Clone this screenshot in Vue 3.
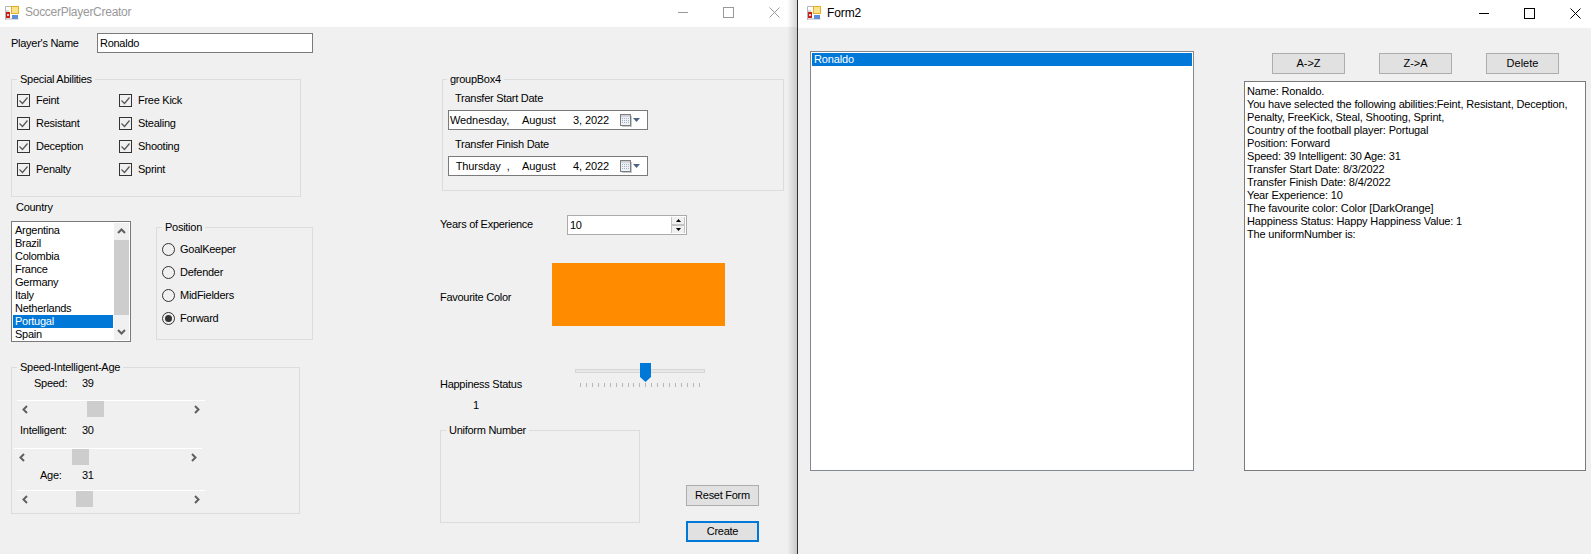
<template>
  <div class="desktop">
    <section class="win win-main">
      <header class="titlebar inactive">
        <svg class="app-icon" viewBox="0 0 14 14" width="14" height="14"><path d="M.5 14V.5H6M.5 5H4M.5 13H13.5" fill="none" stroke="#b5b5b5"/><rect x="1" y="6" width="4" height="6" fill="#c8201c"/><rect x="2" y="8" width="2" height="2" fill="#f4d0c8"/><rect x="6" y="0" width="8" height="8" fill="#e8b020"/><rect x="7" y="1" width="6" height="6" fill="#fbe38c"/><rect x="7" y="9" width="6" height="4" fill="#5b8fd8"/></svg>
        <span class="title-text">SoccerPlayerCreator</span>
        <div class="controls">
          <span class="ctl"><i class="min"></i></span>
          <span class="ctl"><i class="max"></i></span>
          <span class="ctl"><svg width="11" height="11" viewBox="0 0 11 11"><path d="M.5.5l10 10M10.5.5l-10 10" stroke="currentColor" fill="none"/></svg></span>
        </div>
      </header>
      <div class="main-body">
        <div class="col-left">
          <div class="name-row">
            <label class="name-label">Player's Name</label>
            <div class="textbox">Ronaldo</div>
          </div>

          <div class="group abilities">
            <span class="group-title">Special Abilities</span>
            <div class="check-grid">
              <div v-for="a in abilities" :key="a" class="check">
                <svg width="13" height="13" viewBox="0 0 13 13"><rect x=".5" y=".5" width="12" height="12" fill="none" stroke="#333"/><path d="M2.500 6.500l3 3 5-6" fill="none" stroke="#555" stroke-width="1.2"/></svg>
                <span>{{ a }}</span>
              </div>
            </div>
          </div>

          <div class="country-label">Country</div>
          <div class="country-row">
            <div class="listbox">
              <ul class="items">
                <li v-for="c in countries" :key="c" :class="{ sel: c === 'Portugal' }">{{ c }}</li>
              </ul>
              <div class="vscroll">
                <svg class="chev" width="9" height="6" viewBox="0 0 9 6"><path d="M1 5l3.500-3.500L8 5" fill="none" stroke="#606060" stroke-width="2"/></svg>
                <div class="vthumb"></div>
                <svg class="chev" width="9" height="6" viewBox="0 0 9 6"><path d="M1 1l3.500 3.500L8 1" fill="none" stroke="#606060" stroke-width="2"/></svg>
              </div>
            </div>
            <div class="group position">
              <span class="group-title">Position</span>
              <div v-for="p in positions" :key="p" class="radio">
                <span class="dot" :class="{ on: p === 'Forward' }"></span>
                <span>{{ p }}</span>
              </div>
            </div>
          </div>

          <div class="group stats">
            <span class="group-title">Speed-Intelligent-Age</span>
            <div v-for="s in stats" :key="s.name" class="stat" :class="s.cls">
              <div class="stat-line">
                <span class="stat-name">{{ s.name }}</span>
                <span>{{ s.value }}</span>
              </div>
              <div class="hscroll">
                <svg width="6" height="9" viewBox="0 0 6 9"><path d="M5 1L1.500 4.500 5 8" fill="none" stroke="#606060" stroke-width="2"/></svg>
                <div class="hthumb" :style="{ left: s.thumb + 'px' }"></div>
                <svg width="6" height="9" viewBox="0 0 6 9"><path d="M1 1l3.500 3.500L1 8" fill="none" stroke="#606060" stroke-width="2"/></svg>
              </div>
            </div>
          </div>
        </div>

        <div class="col-right">
          <div class="group dates">
            <span class="group-title">groupBox4</span>
            <template v-for="d in dates" :key="d.label">
              <div class="date-label">{{ d.label }}</div>
              <div class="datepicker">
                <span class="d-day">{{ d.day }}</span>
                <span>August</span>
                <span>{{ d.rest }}</span>
                <svg width="12" height="13" viewBox="0 0 12 13"><rect x=".5" y=".5" width="10" height="11" fill="#eef1f6" stroke="#7d7d7d"/><rect x="11" y="2" width="1" height="11" fill="#c8c8c8"/><rect x="2" y="12" width="10" height="1" fill="#c8c8c8"/><rect x="1" y="1" width="9" height="2" fill="#cfd3d9"/><path d="M2.500 4v6M4.500 4v6M6.500 4v6M8.500 4v6" stroke="#a3b1c7" stroke-dasharray="1 1" fill="none"/></svg>
                <svg width="7" height="4" viewBox="0 0 7 4"><path d="M0 0h7L3.500 4z" fill="#4d6185"/></svg>
              </div>
            </template>
          </div>

          <div class="years-row">
            <span class="years-label">Years of Experience</span>
            <div class="numeric">
              <span>10</span>
              <div class="spin">
                <div class="spin-btn"><svg width="5" height="3" viewBox="0 0 5 3"><path d="M2.500 0L5 3H0z" fill="#000"/></svg></div>
                <div class="spin-btn"><svg width="5" height="3" viewBox="0 0 5 3"><path d="M0 0h5L2.500 3z" fill="#000"/></svg></div>
              </div>
            </div>
          </div>

          <div class="color-row">
            <span class="color-label">Favourite Color</span>
            <div class="swatch"></div>
          </div>

          <div class="happy-row">
            <span class="happy-label">Happiness Status</span>
            <div class="slider">
              <div class="track"></div>
              <svg class="knob" width="11" height="19" viewBox="0 0 11 19"><path d="M0 0h11v14l-5.500 5L0 14z" fill="#0078d7"/></svg>
              <div class="ticks"><i v-for="n in 21" :key="n"></i></div>
            </div>
          </div>
          <div class="happy-value">1</div>

          <div class="bottom-row">
            <div class="group uniform">
              <span class="group-title">Uniform Number</span>
            </div>
            <div class="actions">
              <button class="btn">Reset Form</button>
              <button class="btn focus">Create</button>
            </div>
          </div>
        </div>
      </div>
      <div class="drop-shadow"></div>
    </section>

    <section class="win win-second">
      <header class="titlebar">
        <svg class="app-icon" viewBox="0 0 14 14" width="14" height="14"><path d="M.5 14V.5H6M.5 5H4M.5 13H13.5" fill="none" stroke="#b5b5b5"/><rect x="1" y="6" width="4" height="6" fill="#c8201c"/><rect x="2" y="8" width="2" height="2" fill="#f4d0c8"/><rect x="6" y="0" width="8" height="8" fill="#e8b020"/><rect x="7" y="1" width="6" height="6" fill="#fbe38c"/><rect x="7" y="9" width="6" height="4" fill="#5b8fd8"/></svg>
        <span class="title-text">Form2</span>
        <div class="controls">
          <span class="ctl"><i class="min"></i></span>
          <span class="ctl"><i class="max"></i></span>
          <span class="ctl"><svg width="11" height="11" viewBox="0 0 11 11"><path d="M.5.5l10 10M10.5.5l-10 10" stroke="currentColor" fill="none"/></svg></span>
        </div>
      </header>
      <div class="second-body">
        <div class="player-list">
          <div class="player sel">Ronaldo</div>
        </div>
        <div class="second-right">
          <div class="sort-row">
            <button class="btn">A-&gt;Z</button>
            <button class="btn">Z-&gt;A</button>
            <button class="btn">Delete</button>
          </div>
          <div class="summary">
            <div v-for="line in summary" :key="line">{{ line }}</div>
          </div>
        </div>
      </div>
    </section>
  </div>
</template>

<script setup>
const abilities = ['Feint', 'Free Kick', 'Resistant', 'Stealing', 'Deception', 'Shooting', 'Penalty', 'Sprint']
const countries = ['Argentina', 'Brazil', 'Colombia', 'France', 'Germany', 'Italy', 'Netherlands', 'Portugal', 'Spain']
const positions = ['GoalKeeper', 'Defender', 'MidFielders', 'Forward']
const stats = [
  { name: 'Speed:', value: 39, thumb: 70, cls: 'speed' },
  { name: 'Intelligent:', value: 30, thumb: 58, cls: 'intel' },
  { name: 'Age:', value: 31, thumb: 59, cls: 'age' }
]
const dates = [
  { label: 'Transfer Start Date', day: 'Wednesday,', rest: '3, 2022' },
  { label: 'Transfer Finish Date', day: '  Thursday  ,', rest: '4, 2022' }
]
const summary = [
  'Name: Ronaldo.',
  'You have selected the following abilities:Feint, Resistant, Deception,',
  'Penalty, FreeKick, Steal, Shooting, Sprint,',
  'Country of the football player: Portugal',
  'Position: Forward',
  'Speed: 39 Intelligent: 30 Age: 31',
  'Transfer Start Date: 8/3/2022',
  'Transfer Finish Date: 8/4/2022',
  'Year Experience: 10',
  'The favourite color: Color [DarkOrange]',
  'Happiness Status: Happy Happiness Value: 1',
  'The uniformNumber is:'
]
</script>

<style>
html, body {
  margin: 0;
  background: #f0f0f0;
}
</style>

<style scoped>
.desktop {
  display: flex;
  width: 1591px;
  height: 554px;
  overflow: hidden;
  font-family: "Liberation Sans", Arial, sans-serif;
  font-size: 11px;
  line-height: 13px;
  color: #000;
}
.win {
  position: relative;
  height: 554px;
  background: #f0f0f0;
  flex: none;
}
.win-main {
  width: 797px;
  border-right: 1px solid #2f2f2f;
  letter-spacing: -0.27px;
}
.win-second {
  width: 793px;
  letter-spacing: -0.16px;
}
.drop-shadow {
  position: absolute;
  top: 0;
  right: 0;
  bottom: 0;
  width: 10px;
  background: linear-gradient(to right, rgba(0, 0, 0, 0), rgba(0, 0, 0, 0.16));
}

.titlebar {
  display: flex;
  align-items: center;
  box-sizing: border-box;
  height: 27px;
  padding: 0 0 2px 5px;
  background: #fff;
  font-size: 12px;
}
.win-second .titlebar {
  height: 28px;
  padding-left: 9px;
  letter-spacing: -0.1px;
}
.app-icon {
  flex: none;
}
.title-text {
  margin-left: 6px;
}
.inactive .title-text {
  color: #999;
}
.controls {
  display: flex;
  margin-left: auto;
}
.win-second .controls {
  margin-right: -7px;
}
.ctl {
  display: flex;
  align-items: center;
  justify-content: center;
  width: 45.5px;
  height: 24px;
  color: #000;
}
.inactive .ctl {
  color: #999;
}
.ctl .min {
  width: 10px;
  height: 1px;
  background: currentColor;
}
.ctl .max {
  width: 9px;
  height: 9px;
  border: 1px solid currentColor;
}

.main-body {
  display: flex;
}
.col-left {
  width: 302px;
  margin-left: 11px;
}
.col-right {
  margin-left: 127px;
}

.group {
  position: relative;
  box-sizing: border-box;
  border: 1px solid #dcdcdc;
}
.group-title {
  position: absolute;
  top: -7px;
  left: 5px;
  padding: 0 3px;
  background: #f0f0f0;
}

.name-row {
  display: flex;
  align-items: center;
  height: 20px;
  margin-top: 6px;
}
.name-label {
  width: 86px;
}
.textbox {
  box-sizing: border-box;
  width: 216px;
  height: 20px;
  padding: 3px 2px;
  background: #fff;
  border: 1px solid #7a7a7a;
}

.abilities {
  width: 290px;
  height: 118px;
  margin-top: 26px;
}
.check-grid {
  display: grid;
  grid-template-columns: 102px 102px;
  grid-auto-rows: 23px;
  padding: 14px 0 0 5px;
}
.check {
  display: flex;
  align-items: center;
  gap: 6px;
  height: 13px;
}
.check svg {
  flex: none;
}

.country-label {
  margin: 4px 0 0 5px;
}
.country-row {
  display: flex;
  align-items: flex-start;
  margin-top: 7px;
}
.listbox {
  display: flex;
  box-sizing: border-box;
  width: 120px;
  height: 121px;
  padding: 1px;
  background: #fff;
  border: 1px solid #7a7a7a;
}
.items {
  flex: 1;
  margin: 0;
  padding: 1px 0 0;
  list-style: none;
}
.items li {
  padding-left: 2px;
  height: 13px;
}
.sel {
  background: #0078d7;
  color: #fff;
}
.vscroll {
  display: flex;
  flex-direction: column;
  align-items: center;
  justify-content: space-between;
  width: 15px;
  margin-left: 1px;
  padding: 5px 0;
  box-sizing: border-box;
  height: 117px;
  background: #f0f0f0;
}
.vthumb {
  width: 15px;
  height: 75px;
  margin-top: -1px;
  margin-bottom: 7px;
  background: #cdcdcd;
}
.position {
  width: 157px;
  height: 113px;
  margin: 6px 0 0 25px;
  padding: 15px 0 0 5px;
}
.radio {
  display: flex;
  align-items: center;
  gap: 5px;
  height: 13px;
  margin-bottom: 10px;
}
.dot {
  display: flex;
  align-items: center;
  justify-content: center;
  box-sizing: border-box;
  flex: none;
  width: 13px;
  height: 13px;
  border: 1px solid #333;
  border-radius: 50%;
}
.dot.on::after {
  content: "";
  width: 7px;
  height: 7px;
  border-radius: 50%;
  background: #333;
}

.stats {
  width: 289px;
  height: 147px;
  margin-top: 25px;
}
.stat-line {
  display: flex;
  height: 13px;
}
.stat-name {
  width: 62px;
  box-sizing: border-box;
}
.speed .stat-line {
  margin: 9px 0 0 22px;
}
.speed .stat-name {
  width: 48px;
}
.intel .stat-line {
  margin: 7px 0 0 8px;
}
.age .stat-line {
  margin: 4px 0 0 28px;
}
.age .stat-name {
  width: 42px;
}
.hscroll {
  position: relative;
  display: flex;
  align-items: center;
  justify-content: space-between;
  box-sizing: border-box;
  width: 188px;
  height: 17px;
  margin: 10px 0 0 5px;
  padding: 0 5px;
  border-top: 1px solid #fff;
}
.intel .hscroll {
  margin: 11px 0 0 2px;
}
.age .hscroll {
  margin: 8px 0 0 5px;
}
.hthumb {
  position: absolute;
  top: 0;
  width: 17px;
  height: 16px;
  background: #cdcdcd;
}

.dates {
  width: 342px;
  height: 112px;
  margin: 52px 0 0 2px;
  padding: 12px 0 0 5px;
}
.dates .group-title {
  left: 4px;
}
.date-label {
  margin-left: 7px;
  height: 13px;
}
.datepicker {
  display: grid;
  grid-template-columns: 72px 51px 47px 13px 7px;
  align-items: center;
  box-sizing: border-box;
  width: 200px;
  height: 20px;
  margin: 5px 0 8px;
  padding-left: 1px;
  background: #fff;
  border: 1px solid #7a7a7a;
  letter-spacing: -0.1px;
}
.d-day {
  white-space: pre;
}
.years-row {
  display: flex;
  align-items: center;
  margin-top: 24px;
}
.years-label {
  width: 127px;
  margin-top: -2px;
}
.numeric {
  display: flex;
  align-items: center;
  justify-content: space-between;
  box-sizing: border-box;
  width: 120px;
  height: 20px;
  padding: 0 1px 0 2px;
  background: #fff;
  border: 1px solid #ababab;
}
.spin {
  display: flex;
  flex-direction: column;
  gap: 2px;
  width: 14px;
  background: #c4c4c4;
}
.spin-btn {
  display: flex;
  align-items: center;
  justify-content: center;
  box-sizing: border-box;
  height: 7px;
  background: #f0f0f0;
  border: solid #c4c4c4;
  border-width: 0 1px;
}
.color-row {
  display: flex;
  align-items: center;
  margin-top: 28px;
}
.color-label {
  width: 112px;
  margin-top: 5px;
}
.swatch {
  width: 173px;
  height: 63px;
  background: #ff8c00;
}
.happy-row {
  display: flex;
  margin-top: 37px;
}
.happy-label {
  width: 135px;
  margin-top: 15px;
}
.slider {
  position: relative;
  width: 130px;
  height: 24px;
  padding-top: 6px;
  box-sizing: border-box;
}
.track {
  box-sizing: border-box;
  height: 4px;
  background: #e7e7e7;
  border: 1px solid #d6d6d6;
}
.knob {
  position: absolute;
  top: 0;
  left: 65px;
}
.ticks {
  display: flex;
  justify-content: space-between;
  margin: 10px 5px 0;
}
.ticks i {
  width: 1px;
  height: 4px;
  background: #b8b8b8;
}
.happy-value {
  margin: 8px 0 0 33px;
}
.bottom-row {
  display: flex;
  margin-top: 18px;
}
.uniform {
  width: 200px;
  height: 93px;
}
.actions {
  display: flex;
  flex-direction: column;
  gap: 15px;
  margin: 55px 0 0 46px;
}
.btn {
  box-sizing: border-box;
  width: 73px;
  height: 21px;
  padding: 0;
  font: inherit;
  letter-spacing: inherit;
  color: #000;
  background: #e1e1e1;
  border: 1px solid #adadad;
}
.btn.focus {
  border: 2px solid #0078d7;
}

.second-body {
  display: flex;
}
.player-list {
  box-sizing: border-box;
  width: 384px;
  height: 420px;
  margin: 23px 0 0 12px;
  padding: 1px;
  background: #fff;
  border: 1px solid #828790;
}
.player {
  height: 13px;
  padding-left: 2px;
}
.second-right {
  width: 342px;
  margin-left: 50px;
}
.sort-row {
  display: flex;
  gap: 34px;
  margin: 25px 0 0 28px;
  letter-spacing: 0;
}
.summary {
  box-sizing: border-box;
  height: 390px;
  margin-top: 7px;
  padding: 3px 2px;
  background: #fff;
  border: 1px solid #7a7a7a;
}
</style>
